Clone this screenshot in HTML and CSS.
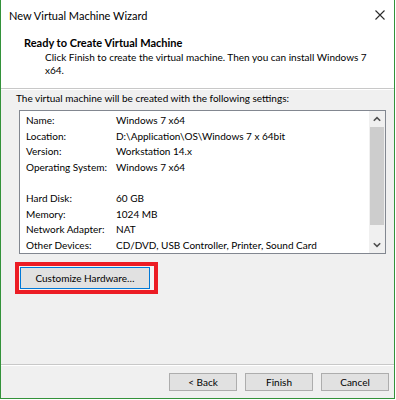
FILE: index.html
```html
<!DOCTYPE html>
<html>
<head>
<meta charset="utf-8">
<link rel="stylesheet" href="styles.css">
</head>
<body>
<div class="window">
  <div class="titlebar">
    <span class="title">New Virtual Machine Wizard</span>
    <svg class="close" width="12" height="12" viewBox="0 0 12 12"><path d="M1.5 1.5 L10.5 10.5 M10.5 1.5 L1.5 10.5" stroke="#2b2b2b" stroke-width="1.1" fill="none"/></svg>
  </div>
  <div class="header">
    <div class="h-title">Ready to Create Virtual Machine</div>
    <div class="h-desc">Click Finish to create the virtual machine. Then you can install Windows 7 x64.</div>
  </div>
  <div class="content">
    <div class="intro">The virtual machine will be created with the following settings:</div>
    <div class="listbox">
      <div class="rows">
        <div class="row"><span class="k">Name:</span><span class="v">Windows 7 x64</span></div>
        <div class="row"><span class="k">Location:</span><span class="v">D:\Application\OS\Windows 7 x 64bit</span></div>
        <div class="row"><span class="k">Version:</span><span class="v">Workstation 14.x</span></div>
        <div class="row"><span class="k">Operating System:</span><span class="v">Windows 7 x64</span></div>
        <div class="row"><span class="k"></span><span class="v"></span></div>
        <div class="row"><span class="k">Hard Disk:</span><span class="v">60 GB</span></div>
        <div class="row"><span class="k">Memory:</span><span class="v">1024 MB</span></div>
        <div class="row"><span class="k">Network Adapter:</span><span class="v">NAT</span></div>
        <div class="row"><span class="k">Other Devices:</span><span class="v">CD/DVD, USB Controller, Printer, Sound Card</span></div>
      </div>
      <div class="scrollbar">
        <div class="arrow"><svg width="8" height="6" viewBox="0 0 8 6"><path d="M0.8 4.8 L4 1.6 L7.2 4.8" stroke="#505050" stroke-width="1.6" fill="none"/></svg></div>
        <div class="track"><div class="thumb"></div></div>
        <div class="arrow"><svg width="8" height="6" viewBox="0 0 8 6"><path d="M0.8 1.2 L4 4.4 L7.2 1.2" stroke="#505050" stroke-width="1.6" fill="none"/></svg></div>
      </div>
    </div>
    <div class="highlight">
      <button class="btn custom">Customize Hardware…</button>
    </div>
  </div>
  <div class="footer">
    <button class="btn">&lt; Back</button>
    <button class="btn">Finish</button>
    <button class="btn">Cancel</button>
  </div>
</div>
</body>
</html>
```
FILE: styles.css
```css
html, body {
  margin: 0;
  padding: 0;
  background: #ffffff;
}
body {
  font-family: Lato, "Noto Sans", sans-serif;
  font-size: 10px;
  line-height: 13px;
  color: #000;
}
.window {
  box-sizing: border-box;
  width: 395px;
  height: 399px;
  border: 1px solid #33923a;
  border-top: none;
  background: #f0f0f0;
  display: flex;
  flex-direction: column;
}
.titlebar {
  height: 30px;
  background: #fff;
  display: flex;
  align-items: center;
  justify-content: space-between;
  padding: 0 8px 0 8px;
  flex: none;
}
.title {
  font-size: 11px;
  color: #000;
}
.close {
  display: block;
  margin-top: -1px;
}
.header {
  background: #fff;
  padding: 6px 0 11px 23px;
  border-bottom: 1px solid #c8c8c8;
  box-shadow: 0 1px 0 #ffffff;
  flex: none;
}
.h-title {
  font-weight: bold;
  font-size: 11px;
}
.h-desc {
  margin-top: 2px;
  padding-left: 21px;
  padding-right: 20px;
}
.content {
  flex: 1;
  padding: 3px 0 0 14px;
}
.intro {
  padding-left: 1px;
}
.listbox {
  box-sizing: border-box;
  width: 367px;
  height: 144px;
  margin: 5px 0 0 4px;
  border: 1px solid #828790;
  background: #fff;
  display: flex;
}
.rows {
  flex: 1;
  padding: 2px 0 0 6px;
}
.row {
  display: flex;
  height: 15.6px;
  line-height: 15.6px;
  white-space: nowrap;
}
.k {
  width: 90px;
  flex: none;
}
.scrollbar {
  width: 16px;
  background: #f0f0f0;
  display: flex;
  flex-direction: column;
}
.arrow {
  height: 16px;
  display: flex;
  align-items: center;
  justify-content: center;
  flex: none;
}
.track {
  flex: 1;
  padding: 0 1px;
  display: flex;
  flex-direction: column;
}
.thumb {
  height: 98px;
  background: #cdcdcd;
}
.highlight {
  display: inline-block;
  margin-top: 8px;
  border: 4px solid #ec1c24;
  padding: 1px 4px 1px 1px;
  background: #f4f4f4;
}
.btn {
  font-family: Lato, "Noto Sans", sans-serif;
  font-size: 10px;
  line-height: 13px;
  color: #000;
  background: #e1e1e1;
  border: 1px solid #adadad;
  padding: 0;
  margin: 0;
  box-sizing: border-box;
  display: block;
}
.custom {
  width: 130px;
  height: 22px;
  border-color: #0078d7;
}
.footer {
  flex: none;
  border-top: 1px solid #c8c8c8;
  box-shadow: inset 0 1px 0 #ffffff;
  padding: 8px 5px 7px 0;
  display: flex;
  justify-content: flex-end;
  gap: 8px;
}
.footer .btn {
  width: 68px;
  height: 18px;
}
```
